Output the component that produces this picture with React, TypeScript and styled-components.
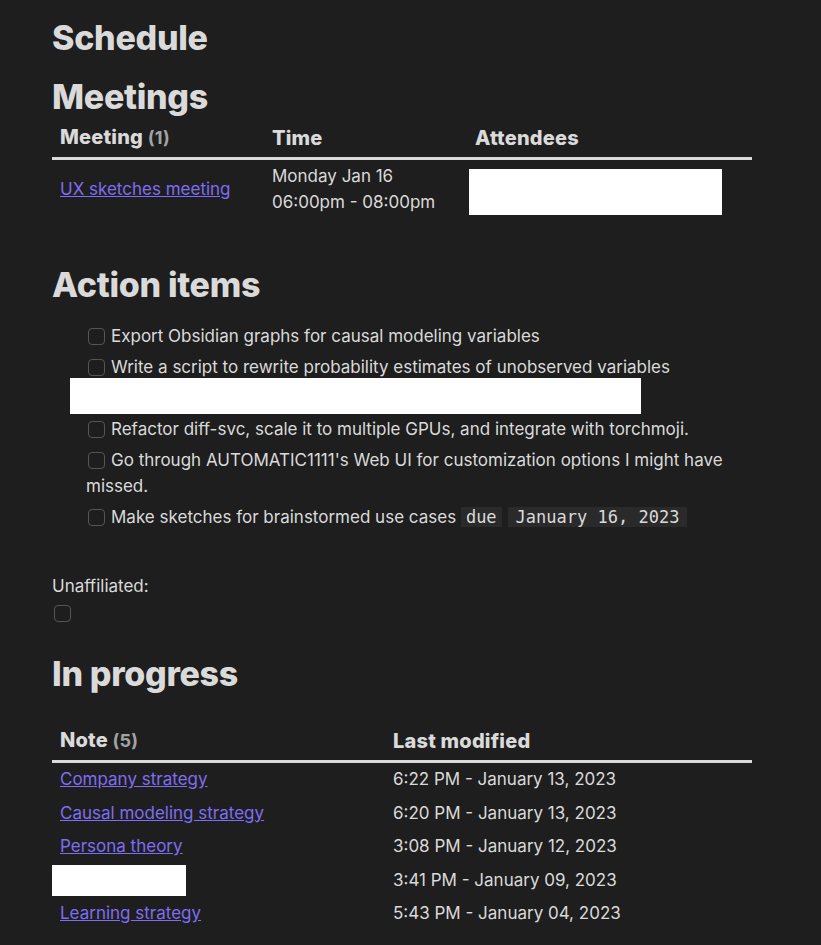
import React from 'react';
import styled, { createGlobalStyle } from 'styled-components';

const GlobalStyle = createGlobalStyle`
	html, body {
		margin: 0;
		padding: 0;
		background: #1e1e1e;
	}
	body {
		font-family: Inter, 'Noto Sans', sans-serif;
		color: #dadada;
		font-size: 17px;
	}
`;

const Page = styled.div`
	width: 700px;
	padding: 18px 0 20px 52px;
`;

const Heading = styled.h2<{ $top?: number }>`
	margin: ${({ $top }) => $top ?? 0}px 0 0;
	font-size: 34px;
	line-height: 40px;
	font-weight: 800;
	letter-spacing: -0.3px;
	color: #dadada;
`;

const Table = styled.table<{ $top?: number }>`
	width: 100%;
	table-layout: fixed;
	border-collapse: collapse;
	margin-top: ${({ $top }) => $top ?? 0}px;
`;

const Th = styled.th`
	text-align: left;
	font-size: 20px;
	font-weight: 800;
	letter-spacing: 0.2px;
	padding: 8px 8px 7px;
	line-height: 24px;
	border-bottom: 3px solid #dadada;
`;

const Count = styled.span`
	color: #a3a3a3;
	font-size: 18px;
	font-weight: 700;
`;

const Td = styled.td<{ $pad?: number }>`
	padding: ${({ $pad }) => $pad ?? 4}px 8px;
	line-height: 25.5px;
	vertical-align: middle;
`;

const Link = styled.a`
	color: #7f6df2;
	text-decoration: underline;
	cursor: pointer;
`;

const Redacted = styled.div<{ $w: number; $h: number; $shift: number; $top?: number }>`
	display: block;
	width: ${({ $w }) => $w}px;
	height: ${({ $h }) => $h}px;
	margin: ${({ $top }) => $top ?? 0}px 0 0 ${({ $shift }) => $shift}px;
	background: #ffffff;
`;

const TaskList = styled.ul`
	list-style: none;
	margin: 18px 0 0;
	padding: 0 0 0 34px;
`;

const Task = styled.li`
	line-height: 26px;
	margin-bottom: 5px;
`;

const Box = styled.span`
	display: inline-block;
	width: 17px;
	height: 17px;
	box-sizing: border-box;
	border: 1px solid #555555;
	border-radius: 4px;
	vertical-align: -3px;
	margin: 0 6px 0 2px;
`;

const RedactedRow = styled.li`
	margin: -7px 0 2px -16px;
	height: 36px;
	width: 571px;
	background: #ffffff;
`;

const Code = styled.code<{ $gap?: number; $pad: number }>`
	font-family: 'DejaVu Sans Mono', 'Liberation Mono', monospace;
	font-size: 17px;
	background: #2a2a2a;
	padding: 0 ${({ $pad }) => $pad}px;
	margin-left: ${({ $gap }) => $gap ?? 0}px;
`;

const Label = styled.div`
	margin-top: 43px;
	line-height: 26px;
`;

const LoneBox = styled(Box)`
	display: block;
	margin: 6px 0 0 2px;
`;

const notes = [
	{ name: 'Company strategy', date: '6:22 PM - January 13, 2023' },
	{ name: 'Causal modeling strategy', date: '6:20 PM - January 13, 2023' },
	{ name: 'Persona theory', date: '3:08 PM - January 12, 2023' },
	{ name: '', date: '3:41 PM - January 09, 2023' },
	{ name: 'Learning strategy', date: '5:43 PM - January 04, 2023' }
];

const App = () => {
	return (
		<Page>
			<GlobalStyle />
			<Heading as="h1">Schedule</Heading>
			<Heading $top={19}>Meetings</Heading>
			<Table>
				<colgroup>
					<col style={{ width: 212 }} />
					<col style={{ width: 203 }} />
					<col />
				</colgroup>
				<thead>
					<tr>
						<Th>
							Meeting <Count>(1)</Count>
						</Th>
						<Th>Time</Th>
						<Th>Attendees</Th>
					</tr>
				</thead>
				<tbody>
					<tr>
						<Td>
							<Link>UX sketches meeting</Link>
						</Td>
						<Td>
							Monday Jan 16
							<br />
							06:00pm - 08:00pm
						</Td>
						<Td>
							<Redacted $w={253} $h={46} $shift={-6} $top={5} />
						</Td>
					</tr>
				</tbody>
			</Table>

			<Heading $top={46}>Action items</Heading>
			<TaskList>
				<Task>
					<Box />
					Export Obsidian graphs for causal modeling variables
				</Task>
				<Task>
					<Box />
					Write a script to rewrite probability estimates of unobserved variables
				</Task>
				<RedactedRow />
				<Task>
					<Box />
					Refactor diff-svc, scale it to multiple GPUs, and integrate with torchmoji.
				</Task>
				<Task>
					<Box />
					Go through AUTOMATIC1111's Web UI for customization options I might have missed.
				</Task>
				<Task>
					<Box />
					Make sketches for brainstormed use cases <Code $pad={5}>due</Code>
					<Code $pad={8} $gap={6}>
						January 16, 2023
					</Code>
				</Task>
			</TaskList>

			<Label>Unaffiliated:</Label>
			<LoneBox />

			<Heading $top={32}>In progress</Heading>
			<Table $top={26}>
				<colgroup>
					<col style={{ width: 333 }} />
					<col />
				</colgroup>
				<thead>
					<tr>
						<Th>
							Note <Count>(5)</Count>
						</Th>
						<Th>Last modified</Th>
					</tr>
				</thead>
				<tbody>
					{notes.map((n) => (
						<tr key={n.date}>
							{n.name ? (
								<Td>
									<Link>{n.name}</Link>
								</Td>
							) : (
								<Td $pad={0}>
									<Redacted $w={134} $h={31} $shift={-8} />
								</Td>
							)}
							<Td>{n.date}</Td>
						</tr>
					))}
				</tbody>
			</Table>
		</Page>
	);
};

export default App;
